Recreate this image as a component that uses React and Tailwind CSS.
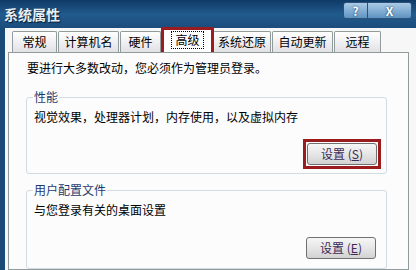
import React from 'react';

const font = { fontFamily: '"Noto Sans CJK SC", "Noto Sans", sans-serif' };

const tabs = [
  { label: '常规', w: 'w-[45px]' },
  { label: '计算机名', w: 'w-[61px]' },
  { label: '硬件', w: 'w-[41px]' },
  { label: '高级', w: 'w-[53px]', active: true },
  { label: '系统还原', w: 'w-[58px]' },
  { label: '自动更新', w: 'w-[61px]' },
  { label: '远程', w: 'w-[47px]' },
];

const Tab = ({ tab }) => {
  if (tab.active) {
    return (
      <div className={`${tab.w} h-[25px] -mx-[1px] relative z-10 bg-white border-[3px] border-[#9b1c1f] border-b-0 flex items-start justify-center pt-[1px]`}>
        <span className="border border-dotted border-black px-[3px] leading-[16px] text-[12px] text-black">{tab.label}</span>
      </div>
    );
  }
  return (
    <div className={`${tab.w} h-[21px] mr-[1px] rounded-t-[2px] border border-[#919b9c] border-b-0 bg-gradient-to-b from-white to-[#e2e2e6] flex items-center justify-center text-[12px] text-black`}>
      {tab.label}
    </div>
  );
};

const Button = ({ hotkey }) => (
  <div className="w-[70px] h-[22px] rounded-[3px] border border-[#707070] bg-gradient-to-b from-[#f6f6f6] via-[#e6e6e6] to-[#d2d2d2] flex items-center justify-center text-[12px] text-[#3c2a58]">
    设置 (<span className="underline">{hotkey}</span>)
  </div>
);

const Group = ({ title, text, children, className }) => (
  <div className={`relative ml-[17px] w-[361px] rounded-[3px] border border-[#d0dbe3] ${className}`}>
    <div className="absolute -top-[9px] left-[6px] bg-[#fcfcfd] px-[1px] text-[12px] leading-[16px] text-[#1e3a6e]">{title}</div>
    <div className="pl-[7px] pt-[11px] text-[12px] text-black leading-[16px]">{text}</div>
    {children}
  </div>
);

export default function App() {
  return (
    <div className="w-[416px] h-[270px] overflow-hidden flex flex-col bg-[#1a4a78]" style={font}>
      {/* title bar */}
      <div className="h-[28px] shrink-0 flex items-start justify-between bg-gradient-to-b from-[#0f3a66] via-[#215a8c] to-[#1b4d7d]">
        <div className="pl-[4px] pt-[5px] text-[14px] leading-[18px] font-bold text-[#e8eef4] [text-shadow:1px_1px_1px_#061a30]">系统属性</div>
        <div className="flex pt-[2px] pr-[4px]">
          <div className="w-[25px] h-[17px] rounded-l-[3px] border border-[#2c5377] bg-gradient-to-b from-[#a9cbe6] to-[#5f93c2] flex items-center justify-center text-[12px] font-bold text-white [text-shadow:0_0_2px_#0c2a4a]">?</div>
          <div className="w-[44px] h-[17px] rounded-r-[3px] border border-l-0 border-[#2c5377] bg-gradient-to-b from-[#a9cbe6] to-[#5f93c2] flex items-center justify-center text-[12px] font-bold text-white [text-shadow:0_0_2px_#0c2a4a]">X</div>
        </div>
      </div>

      {/* body */}
      <div className="flex-1 ml-[5px] bg-[#f7f7f8] pl-[3px] pr-[7px] pt-[1px] flex flex-col">
        <div className="flex items-end pl-[4px] h-[23px] shrink-0">
          {tabs.map((t) => (
            <Tab key={t.label} tab={t} />
          ))}
        </div>
        <div className="flex-1 border border-[#919b9c] bg-[#fcfcfd] pt-[7px]">
          <div className="pl-[18px] text-[12px] leading-[16px] text-black">要进行大多数改动，您必须作为管理员登录。</div>

          <Group title="性能" text="视觉效果，处理器计划，内存使用，以及虚拟内存" className="mt-[21px] h-[77px]">
            <div className="absolute left-[276px] top-[41px] border-[3px] border-[#9b1c1f] p-[1px]">
              <Button hotkey="S" />
            </div>
          </Group>

          <Group title="用户配置文件" text="与您登录有关的桌面设置" className="mt-[16px] h-[79px]">
            <div className="absolute left-[279px] top-[46px]">
              <Button hotkey="E" />
            </div>
          </Group>
        </div>
      </div>
    </div>
  );
}
